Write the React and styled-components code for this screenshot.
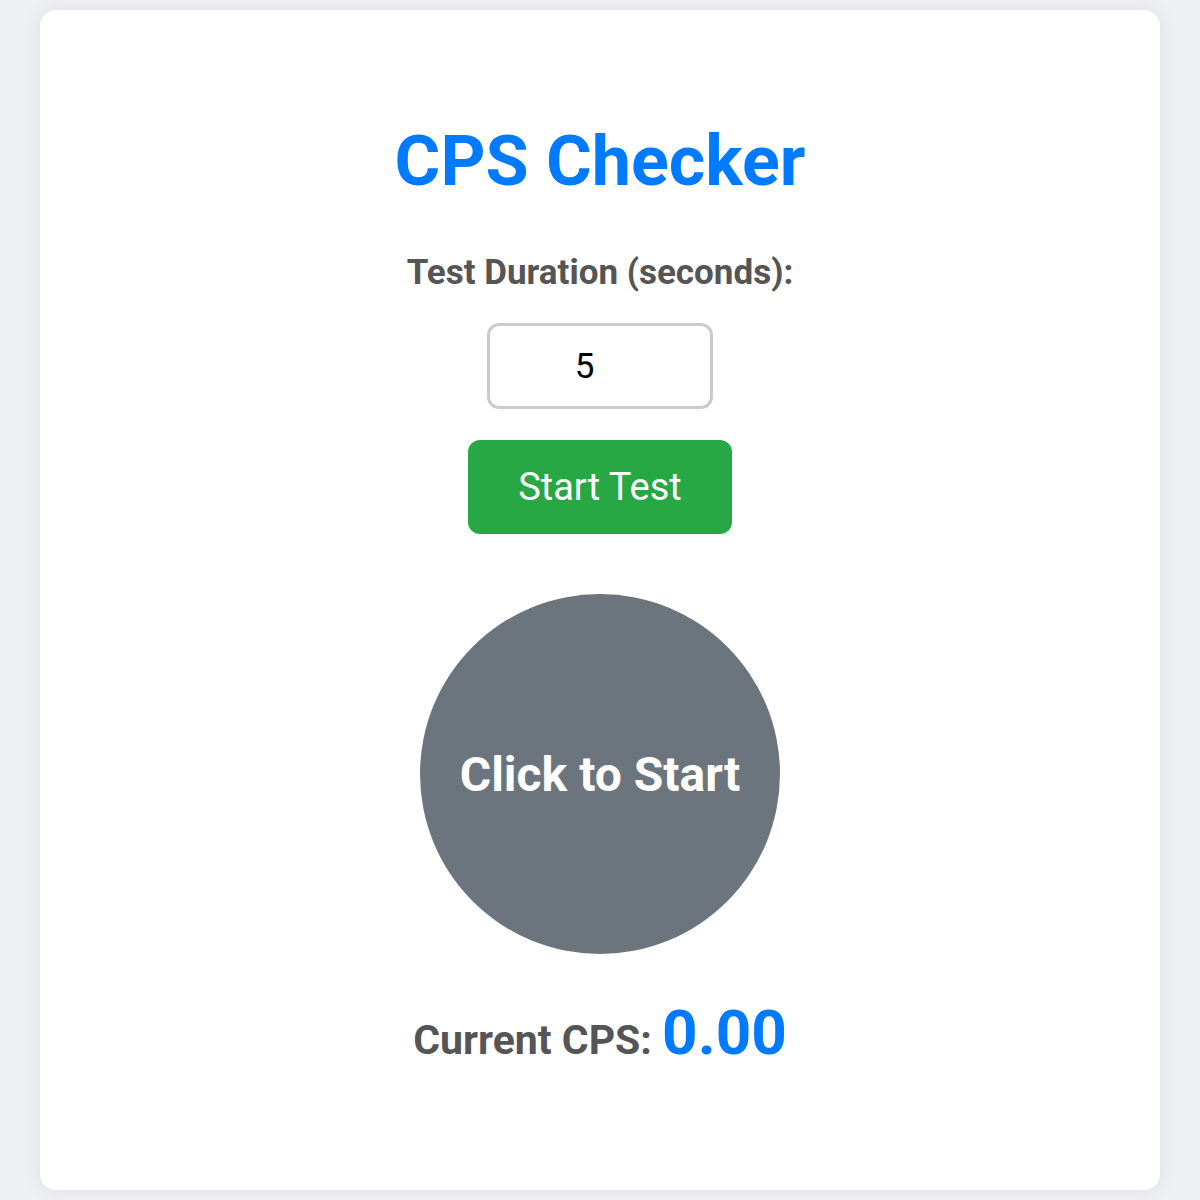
import React, { useState } from 'react'
import styled, { createGlobalStyle } from 'styled-components'

const GlobalStyle = createGlobalStyle`
  html, body {
    margin: 0;
    padding: 0;
    background: #eef0f3;
    font-family: Roboto, "Liberation Sans", sans-serif;
  }
`

const Page = styled.div`
  padding: 10px 40px;
`

const Card = styled.main`
  box-sizing: border-box;
  height: 1180px;
  background: #fff;
  border-radius: 16px;
  box-shadow: 0 0 20px rgba(0, 0, 0, 0.08);
  display: flex;
  flex-direction: column;
  align-items: center;
  padding-top: 109px;
`

const Title = styled.h1`
  margin: 0;
  font-size: 70px;
  line-height: 84px;
  font-weight: 700;
  color: #007bff;
`

const Label = styled.label`
  margin-top: 49px;
  font-size: 35px;
  line-height: 42px;
  font-weight: 700;
  color: #555;
`

const DurationInput = styled.input`
  box-sizing: border-box;
  margin-top: 29px;
  width: 226px;
  height: 86px;
  padding: 0 28px 0 12px;
  border: 3px solid #ccc;
  border-radius: 12px;
  font-family: inherit;
  font-size: 35px;
  text-align: center;
  color: #000;
  outline: none;
`

const StartButton = styled.button`
  margin-top: 31px;
  width: 264px;
  height: 94px;
  border: none;
  border-radius: 12px;
  background: #28a745;
  color: #fff;
  font-family: inherit;
  font-size: 38px;
  cursor: pointer;
`

const ClickCircle = styled.button`
  margin-top: 60px;
  width: 360px;
  height: 360px;
  border: none;
  border-radius: 50%;
  background: ${({ active }) => (active ? '#007bff' : '#6c757d')};
  color: #fff;
  font-family: inherit;
  font-size: 48px;
  font-weight: 700;
  cursor: pointer;
`

const Result = styled.p`
  margin: 42px 0 0;
  font-size: 41px;
  font-weight: 700;
  color: #555;
`

const Value = styled.span`
  font-size: 62px;
  color: #007bff;
`

export default function App() {
  const [duration, setDuration] = useState(5)
  const [cps] = useState(0)

  return (
    <>
      <GlobalStyle />
      <Page>
        <Card>
          <Title>CPS Checker</Title>
          <Label htmlFor="duration">Test Duration (seconds):</Label>
          <DurationInput
            id="duration"
            type="number"
            value={duration}
            onChange={e => setDuration(e.target.value)}
          />
          <StartButton>Start Test</StartButton>
          <ClickCircle>Click to Start</ClickCircle>
          <Result>
            Current CPS: <Value>{cps.toFixed(2)}</Value>
          </Result>
        </Card>
      </Page>
    </>
  )
}
